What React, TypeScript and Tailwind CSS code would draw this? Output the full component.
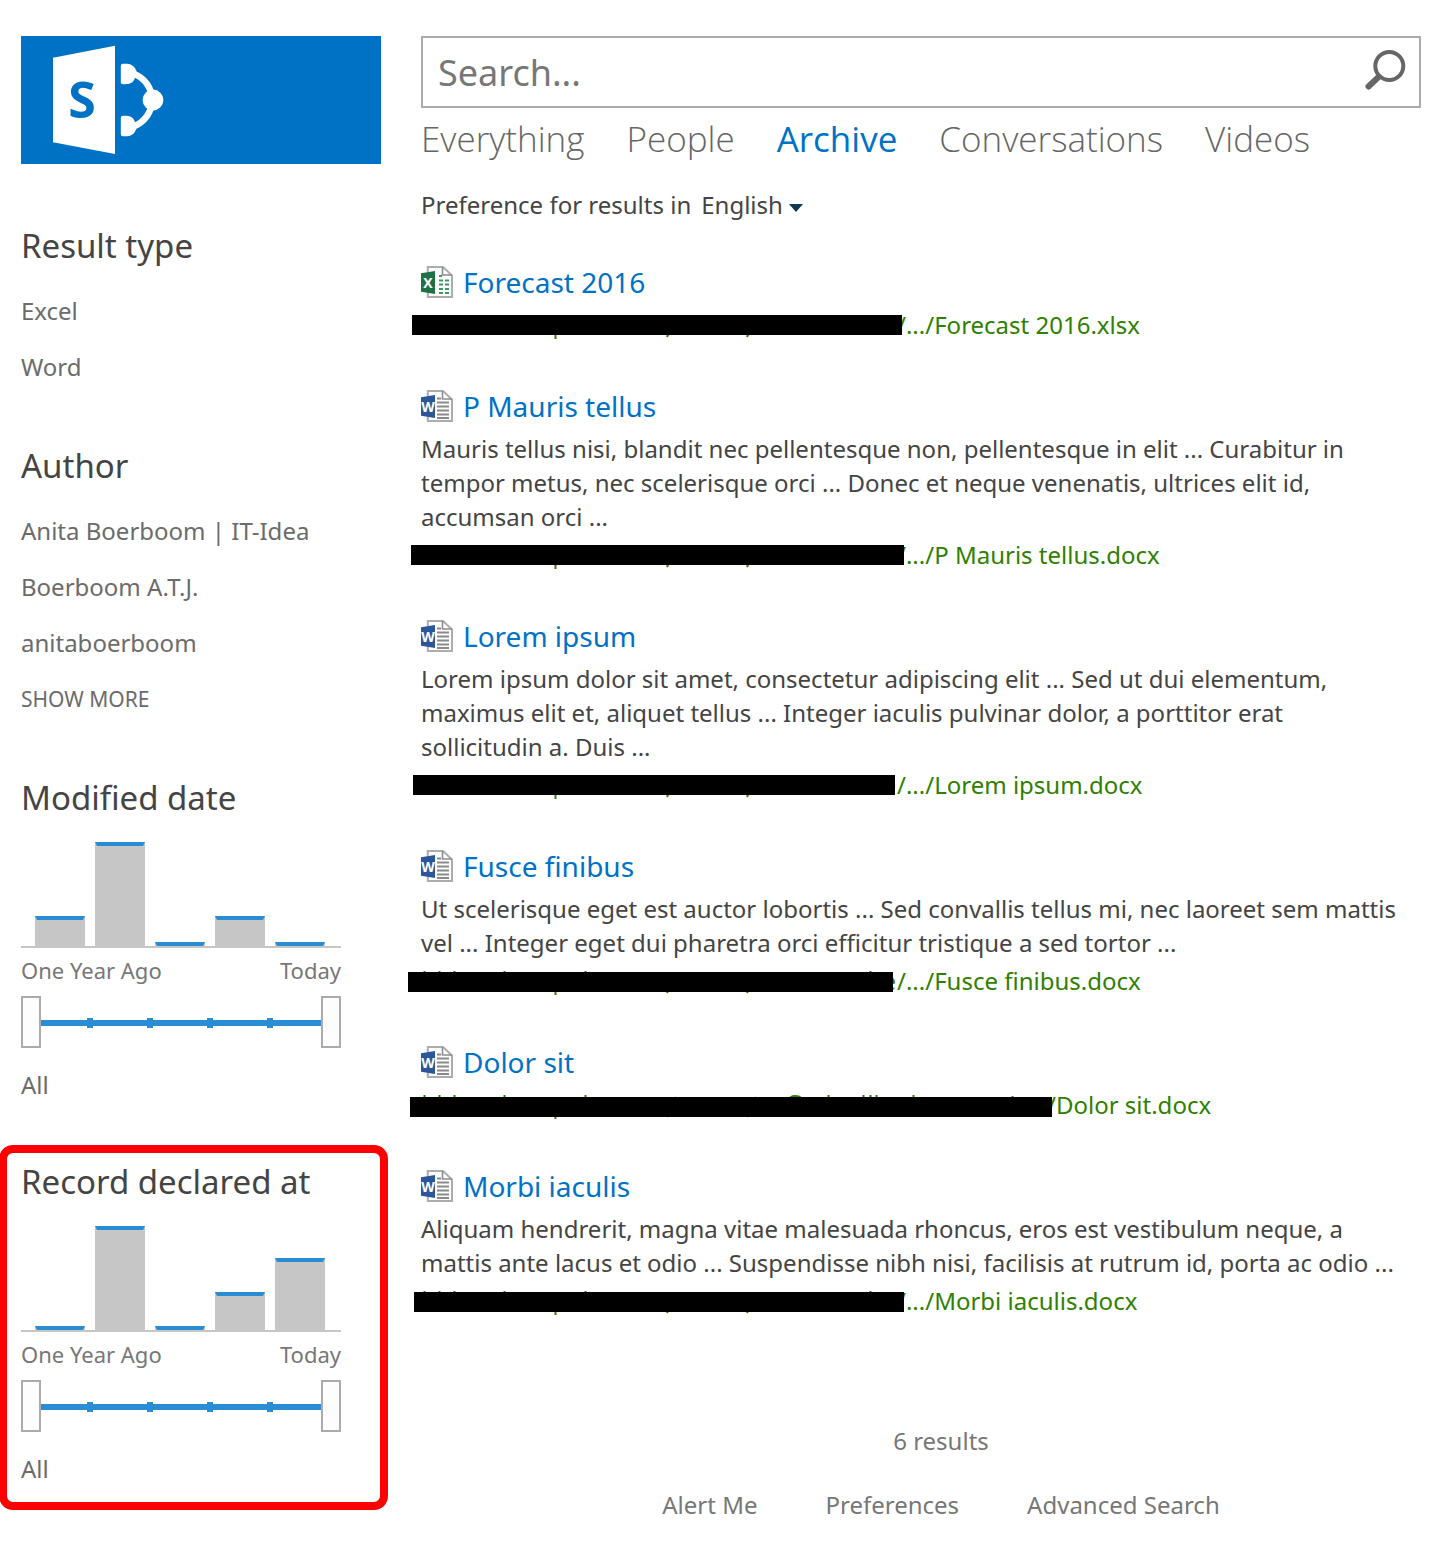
import React, { useState } from "react";

type Kind = "excel" | "word";

interface Result {
  title: string;
  kind: Kind;
  summary?: string;
  bar: string;
  path: string;
  long?: boolean;
}

const results: Result[] = [
  {
    title: "Forecast 2016",
    kind: "excel",
    bar: "top-[7px] -left-[9px] w-[490px]",
    path: "/.../Forecast 2016.xlsx",
  },
  {
    title: "P Mauris tellus",
    kind: "word",
    summary:
      "Mauris tellus nisi, blandit nec pellentesque non, pellentesque in elit ... Curabitur in tempor metus, nec scelerisque orci ... Donec et neque venenatis, ultrices elit id, accumsan orci ...",
    bar: "top-[7px] -left-[10px] w-[493px]",
    path: "/.../P Mauris tellus.docx",
  },
  {
    title: "Lorem ipsum",
    kind: "word",
    summary:
      "Lorem ipsum dolor sit amet, consectetur adipiscing elit ... Sed ut dui elementum, maximus elit et, aliquet tellus ... Integer iaculis pulvinar dolor, a porttitor erat sollicitudin a. Duis ...",
    bar: "top-[7px] -left-[8px] w-[482px]",
    path: "/.../Lorem ipsum.docx",
  },
  {
    title: "Fusce finibus",
    kind: "word",
    summary:
      "Ut scelerisque eget est auctor lobortis ... Sed convallis tellus mi, nec laoreet sem mattis vel ... Integer eget dui pharetra orci efficitur tristique a sed tortor ...",
    bar: "top-[8px] -left-[13px] w-[485px]",
    path: "/.../Fusce finibus.docx",
  },
  {
    title: "Dolor sit",
    kind: "word",
    bar: "top-[9px] -left-[11px] w-[642px]",
    path: "/Dolor sit.docx",
    long: true,
  },
  {
    title: "Morbi iaculis",
    kind: "word",
    summary:
      "Aliquam hendrerit, magna vitae malesuada rhoncus, eros est vestibulum neque, a mattis ante lacus et odio ... Suspendisse nibh nisi, facilisis at rutrum id, porta ac odio ...",
    bar: "top-[8px] -left-[7px] w-[490px]",
    path: "/.../Morbi iaculis.docx",
  },
];

function SharePointLogo() {
  return (
    <svg viewBox="0 0 160 128" className="h-32 w-40" role="img" aria-label="SharePoint">
      <path d="M32 21.7 94 9.7V118L32 106.2Z" fill="#fff" />
      <text
        x="61"
        y="82"
        textAnchor="middle"
        fill="#0072c6"
        className="font-['Open_Sans',sans-serif] text-[50px] font-bold"
      >
        S
      </text>
      <path d="M112 37.5A28 28 0 0 1 112 90.5" fill="none" stroke="#fff" strokeWidth="6.5" />
      <path d="M102 27.8H106C112 28 115.5 33 116 38L112.5 45C110 48 107 48.2 102 48.2Q99.8 48.2 99.8 46V30Q99.8 27.8 102 27.8Z" fill="#fff" />
      <path d="M102 100.2H106C112 100 115.5 95 116 90L112.5 83C110 80 107 79.8 102 79.8Q99.8 79.8 99.8 82V98Q99.8 100.2 102 100.2Z" fill="#fff" />
      <circle cx="132" cy="64" r="10.4" fill="#fff" />
    </svg>
  );
}

function FileIcon({ kind }: { kind: Kind }) {
  const excel = kind === "excel";
  return (
    <svg viewBox="0 0 32 32" className="h-8 w-8 shrink-0" aria-hidden="true">
      <path d="M6.8 1H22L31 9.5V31H6.8Z" fill="#fff" stroke="#adadad" strokeWidth="2" />
      <path d="M21.5 1V9H31" fill="none" stroke="#8c8c8c" strokeWidth="1.6" />
      {excel ? (
        <path
          d="M18 10h3M18 14.5h4M24 14.5h4M18 18.5h4M24 18.5h4M18 23h4M24 23h4M18 27h4M24 27h4"
          stroke="#3a9a63"
          strokeWidth="2"
        />
      ) : (
        <path d="M16 8.5h4M16 12.5h12M16 16.5h12M16 20.5h12M16 24.5h12M16 28h12" stroke="#8a8a8a" strokeWidth="1.8" />
      )}
      <path d="M0 7.2 14 5V28L0 25.8Z" fill={excel ? "#1e7145" : "#2b579a"} />
      <text
        x="7"
        y="21.5"
        textAnchor="middle"
        fill="#fff"
        className="font-['Open_Sans',sans-serif] text-[14px] font-bold"
      >
        {excel ? "X" : "W"}
      </text>
    </svg>
  );
}

function RedactedUrl({ bar, long }: { bar: string; long?: boolean }) {
  return (
    <>
      <svg
        viewBox={long ? "0 0 626 34" : "0 0 476 34"}
        className={long ? "h-[34px] w-[626px] shrink-0" : "h-[34px] w-[476px] shrink-0"}
        aria-hidden="true"
      >
        <path
          d="M3.5 7v12M18.5 7v12M33.5 7v12M83.5 7v12M134.5 14v17M164.5 7v12M186.5 9v10M246 29l9-20M326 29l9-20M449.5 7v12"
          fill="none"
          stroke="#2f8000"
          strokeWidth="2"
        />
        {long && (
          <path
            d="M368 12q1-4 6-4t6 2M407.5 7v12M442.5 7v12M455.5 7v12M492.5 7v12M591.5 8v10"
            fill="none"
            stroke="#2f8000"
            strokeWidth="2"
          />
        )}
        {!long && (
          <text x="475" y="26" textAnchor="end" fill="#2f8000" className="font-['Noto_Sans',sans-serif] text-[24px]">
            e
          </text>
        )}
      </svg>
      <span className={`absolute h-5 bg-black ${bar}`} />
    </>
  );
}

function ResultItem({ item }: { item: Result }) {
  return (
    <li>
      <h3 className="flex h-10 items-center gap-[10px] text-[28px]">
        <FileIcon kind={item.kind} />
        <a href="#" className="text-[#0072c6]">
          {item.title}
        </a>
      </h3>
      <div className="flex flex-col gap-1 pt-1.5">
        {item.summary && <p className="pr-5">{item.summary}</p>}
        <a href="#" className="relative flex whitespace-nowrap text-[#2f8000]">
          <RedactedUrl bar={item.bar} long={item.long} />
          <span>{item.path}</span>
        </a>
      </div>
    </li>
  );
}

function Heading({ children }: { children: React.ReactNode }) {
  return <h2 className="text-[33px] leading-[46px] text-[#444]">{children}</h2>;
}

function LinkRefiner({ title, items, more }: { title: string; items: string[]; more?: boolean }) {
  return (
    <section>
      <Heading>{title}</Heading>
      <ul className="mt-[14px]">
        {items.map((item) => (
          <li key={item} className="flex h-14 items-center">
            <a href="#">{item}</a>
          </li>
        ))}
      </ul>
      {more && (
        <button type="button" className="flex h-14 items-center text-[21px]">
          SHOW MORE
        </button>
      )}
    </section>
  );
}

const thumb =
  "pointer-events-none absolute inset-0 h-full w-full appearance-none bg-transparent [&::-webkit-slider-thumb]:pointer-events-auto [&::-webkit-slider-thumb]:box-border [&::-webkit-slider-thumb]:h-[52px] [&::-webkit-slider-thumb]:w-5 [&::-webkit-slider-thumb]:appearance-none [&::-webkit-slider-thumb]:rounded-none [&::-webkit-slider-thumb]:border-2 [&::-webkit-slider-thumb]:border-[#ababab] [&::-webkit-slider-thumb]:bg-[#fdfdfd]";

function DateRefiner({ title, bars, marked }: { title: string; bars: number[]; marked?: boolean }) {
  const [range, setRange] = useState([0, 5]);
  return (
    <section className="relative">
      {marked && (
        <span className="pointer-events-none absolute -top-[14px] -right-[7px] -bottom-[15px] -left-[22px] rounded-[14px] border-8 border-[#ff0000]" />
      )}
      <Heading>{title}</Heading>
      <div className="w-80">
        <div className="mt-[21px] flex h-[106px] items-end gap-[10px] border-b-2 border-[#c6c6c6] px-[14px]">
          {bars.map((height, i) => (
            <div
              key={i}
              className="w-[50px] border-x-2 border-t-4 border-x-[#c6c6c6] border-t-[#2a8dd4] bg-[#c6c6c6]"
              style={{ height }}
            />
          ))}
        </div>
        <div className="flex justify-between text-[22px] leading-[44px] text-[#777]">
          <span>One Year Ago</span>
          <span>Today</span>
        </div>
        <div className="relative mt-1 h-[52px]">
          <div className="absolute inset-x-5 top-6 h-1.5 bg-[#2a8dd4]" />
          <div className="absolute inset-x-0 top-[22px] flex justify-between pr-[68px] pl-[66px]">
            <span className="h-2.5 w-1.5 bg-[#2a8dd4]" />
            <span className="h-2.5 w-1.5 bg-[#2a8dd4]" />
            <span className="h-2.5 w-1.5 bg-[#2a8dd4]" />
            <span className="h-2.5 w-1.5 bg-[#2a8dd4]" />
          </div>
          <input
            type="range"
            min={0}
            max={5}
            value={range[0]}
            aria-label={`${title} from`}
            onChange={(e) => setRange([Math.min(Number(e.target.value), range[1] - 1), range[1]])}
            className={thumb}
          />
          <input
            type="range"
            min={0}
            max={5}
            value={range[1]}
            aria-label={`${title} to`}
            onChange={(e) => setRange([range[0], Math.max(Number(e.target.value), range[0] + 1)])}
            className={thumb}
          />
        </div>
      </div>
      <p className="mt-[10px] leading-[53px]">All</p>
    </section>
  );
}

const tabs = ["Everything", "People", "Archive", "Conversations", "Videos"];

export default function App() {
  return (
    <div className="flex gap-10 bg-white pt-9 pr-[22px] pb-8 pl-[21px] font-['Noto_Sans',sans-serif] text-[24px] leading-[34px] text-[#444]">
      <aside className="w-[360px] shrink-0 text-[#6b6b6b]">
        <a href="#" className="block h-32 bg-[#0072c6]">
          <SharePointLogo />
        </a>
        <div className="mt-[59px] flex flex-col gap-12">
          <LinkRefiner title="Result type" items={["Excel", "Word"]} />
          <LinkRefiner title="Author" items={["Anita Boerboom | IT-Idea", "Boerboom A.T.J.", "anitaboerboom"]} more />
          <DateRefiner title="Modified date" bars={[30, 104, 4, 30, 4]} />
          <DateRefiner title="Record declared at" bars={[4, 104, 4, 38, 72]} marked />
        </div>
      </aside>

      <main className="min-w-0 flex-1">
        <form className="flex h-[72px] items-center border-2 border-[#ababab] pr-3 pl-[15px]">
          <input
            type="text"
            placeholder="Search..."
            aria-label="Search"
            className="h-full min-w-0 flex-1 bg-transparent text-[36px] outline-none placeholder:text-[#777]"
          />
          <button type="button" aria-label="Search" className="mb-2 shrink-0">
            <svg viewBox="0 0 44 44" className="h-11 w-11">
              <circle cx="26.3" cy="20" r="14" fill="none" stroke="#666" strokeWidth="4" />
              <path d="M15.5 31 5.5 40.5" stroke="#666" strokeWidth="6" strokeLinecap="round" />
            </svg>
          </button>
        </form>

        <nav className="flex gap-[42px] font-['Open_Sans',sans-serif] text-[35px] leading-[62px]">
          {tabs.map((tab) => (
            <a
              key={tab}
              href="#"
              aria-current={tab === "Archive" ? "page" : undefined}
              className={tab === "Archive" ? "text-[#0072c6]" : "font-light text-[#666]"}
            >
              {tab}
            </a>
          ))}
        </nav>

        <div className="mt-[18px] flex items-center">
          <label htmlFor="language" className="mr-2.5">
            Preference for results in
          </label>
          <select id="language" className="appearance-none bg-transparent">
            <option>English</option>
          </select>
          <svg viewBox="0 0 14 8" className="mt-1.5 ml-1.5 h-2 w-3.5" aria-hidden="true">
            <path d="M0 0H14L7 8Z" fill="#0f3a52" />
          </svg>
        </div>

        <ul className="mt-10 flex flex-col gap-11">
          {results.map((item) => (
            <ResultItem key={item.title} item={item} />
          ))}
        </ul>

        <footer className="mt-[106px] flex flex-col items-center gap-[30px] pl-10 text-[#777]">
          <p>6 results</p>
          <div className="flex gap-[68px]">
            <a href="#">Alert Me</a>
            <a href="#">Preferences</a>
            <a href="#">Advanced Search</a>
          </div>
        </footer>
      </main>
    </div>
  );
}
